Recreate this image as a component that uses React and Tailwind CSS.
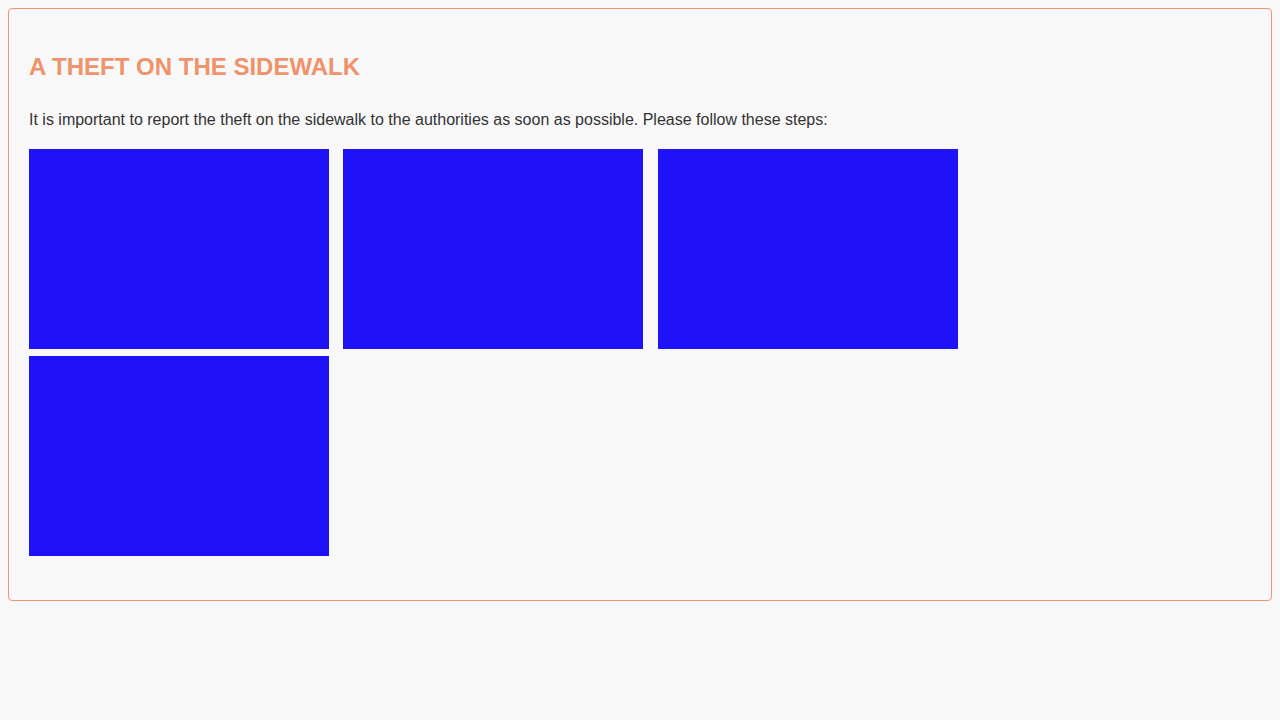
export default function App() {
  return (
    <div
      className="min-h-screen bg-[#f8f8f8] p-2"
      style={{ fontFamily: '"Liberation Sans", Arial, sans-serif' }}
    >
      <div className="rounded-[4px] border border-[#f0956a] px-5 pt-5 pb-[44px]">
        <h2 className="mt-6 text-[24px] leading-[28px] font-bold text-[#f0926a]">
          A THEFT ON THE SIDEWALK
        </h2>
        <p className="mt-[30px] text-[16px] leading-[18px] text-[#333333]">
          It is important to report the theft on the sidewalk to the authorities as soon as possible. Please follow these steps:
        </p>
        <div className="mt-[20px] flex flex-wrap gap-x-[14.4px] gap-y-[7px]">
          <div className="h-[200px] w-[300px] bg-[#2012f8]" />
          <div className="h-[200px] w-[300px] bg-[#2012f8]" />
          <div className="h-[200px] w-[300px] bg-[#2012f8]" />
          <div className="h-[200px] w-[300px] bg-[#2012f8]" />
        </div>
      </div>
    </div>
  );
}
